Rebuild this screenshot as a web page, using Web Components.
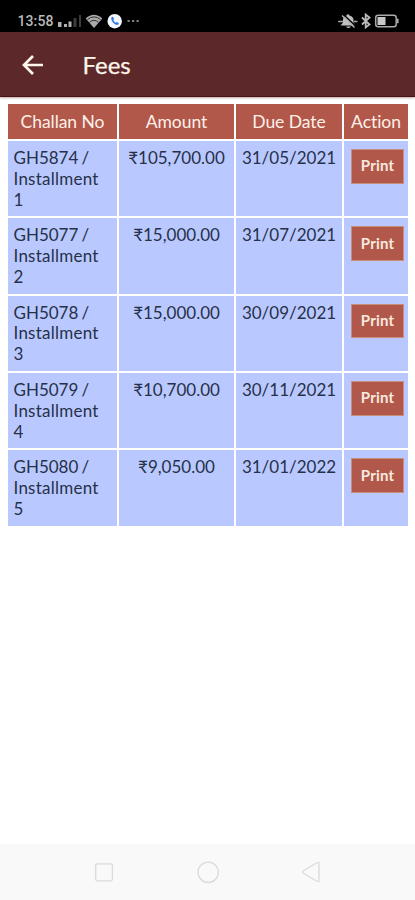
<!DOCTYPE html>
<html lang="en">
<head>
<meta charset="utf-8">
<meta name="viewport" content="width=device-width, initial-scale=1">
<title>Fees</title>
<style>
	body { margin: 0; background: #fff; font-family: Lato, "Noto Sans", sans-serif; font-variant-ligatures: none; }
</style>
</head>
<body>
<fees-screen></fees-screen>

<script>
// status-bar
class StatusBar extends HTMLElement {
	constructor() {
		super();
		this.attachShadow({ mode: "open" }).innerHTML = `
			<style>
				:host{display:flex; justify-content:space-between; box-sizing:border-box; height:32px; padding:10px 15px 0 17.500px; background:#000; color:#b9b9b9}
				.side{display:flex; align-items:center; height:22px}
				.time{font:500 14px/22px Roboto, sans-serif; width:36.500px; letter-spacing:.1px; white-space:nowrap}
				svg{display:block; flex:none}
			</style>
			<div class="side">
				<span class="time"><slot></slot></span>
				<svg width="86" height="22" viewBox="0 0 86 22">
					<g fill="#b0b0b0"><rect x="4" y="12" width="3.5" height="5"/><rect x="10" y="14" width="3" height="3"/><rect x="14.5" y="11.5" width="3" height="5.5"/></g>
					<g fill="#3c3c3c"><rect x="19.5" y="8" width="3" height="9"/><rect x="25" y="5" width="2" height="12"/></g>
					<path d="M31.700 8.500Q40 1 48.300 8.500L40 18Z" fill="#aaa"/>
					<g fill="none" stroke="#222" stroke-width=".9"><path d="M33.500 9.500Q40 4.300 46.500 9.500"/><path d="M35.500 12.300Q40 8.300 44.500 12.300"/></g>
					<circle cx="60.700" cy="11.200" r="7.200" fill="#f4f8ff"/>
					<path d="M57.400 7.300C56.400 10.600 60 14.800 63.700 15.100L65 13.400L62.900 11.900L61.700 12.700C60.500 12 59.700 11.100 59.300 10L60.100 9L59 6.700Z" fill="#3478df"/>
					<g fill="#808080"><rect x="73.500" y="10" width="2.200" height="2"/><rect x="78" y="10" width="2.200" height="2"/><rect x="82.500" y="10" width="2.200" height="2"/></g>
				</svg>
			</div>
			<div class="side">
				<svg width="63" height="22" viewBox="0 0 63 22">
					<path d="M3.500 15.500L6 12.500V10Q6 6.500 9.500 5.500Q11 3 12.500 5.500Q16.500 6.500 16.500 10V12.500L18.500 15.500ZM9 16.500H14Q11.500 19.500 9 16.500Z" fill="#c0c0c0"/>
					<path d="M6.500 4.500L18.500 16" stroke="#000" stroke-width="1.400"/>
					<path d="M5 5.500L17.500 17.500" stroke="#b5b5b5" stroke-width="1.500"/>
					<path d="M1.200 11.500H6M17 11.500H20.500" stroke="#aaa" stroke-width="1.700"/>
					<path d="M25 7.500L32.500 14.500L28.700 17.500V4.500L32.500 7.500L25 14.500" fill="none" stroke="#bbb" stroke-width="1.800"/>
					<rect x="38.700" y="5.200" width="20.500" height="11.600" rx="2.500" fill="none" stroke="#aaa" stroke-width="1.500"/>
					<rect x="40.500" y="7" width="8" height="8" fill="#c8c8c8"/>
					<rect x="60" y="8.700" width="1.600" height="4.500" fill="#aaa"/>
				</svg>
			</div>`;
	}
}
customElements.define("status-bar", StatusBar);

// app-bar
class AppBar extends HTMLElement {
	constructor() {
		super();
		this.attachShadow({ mode: "open" }).innerHTML = `
			<style>
				:host{display:flex; align-items:center; box-sizing:border-box; height:65px; padding:1px 0 0 22px; background:#5d2829; border-bottom:1px solid #4a1012; box-shadow:0 1px 2px rgba(93,40,41,.4); color:#fff6ed}
				svg{display:block; width:22px; margin-right:38.500px}
				h1{margin:0; font-size:24px; line-height:32px; font-weight:400; -webkit-text-stroke:.25px currentColor}
			</style>
			<svg height="22" viewBox="0 0 22 22"><path d="M21 11H2.500M11 2L2 11L11 20" fill="none" stroke="currentColor" stroke-width="2.700"/></svg>
			<h1><slot></slot></h1>`;
	}
}
customElements.define("app-bar", AppBar);

class PrintButton extends HTMLElement {
	constructor() {
		super();
		this.attachShadow({ mode: "open" }).innerHTML = `
			<style>
				:host{display:block}
				button{display:block; box-sizing:border-box; width:53px; height:34.500px; padding:0 0 1px; border:1px solid #c98e7b; background:#b1584b; color:#f8e9df; font:700 15px/20px Lato, sans-serif; letter-spacing:.15px}
				slot{display:block; margin-top:-1px}
			</style>
			<button><slot></slot></button>`;
	}
}
customElements.define("print-button", PrintButton);

// one line of the table, use the "head" attribute for the titles
class FeeRow extends HTMLElement {
	constructor() {
		super();
		this.attachShadow({ mode: "open" }).innerHTML = `
			<style>
				:host{display:grid; grid-template-columns:109px 115px 106px 64px; column-gap:2px; height:75.350px; color:#273048; font-size:17px; line-height:20.800px}
				:host([head]){height:35px; color:#fff0e7; font-size:17.500px; line-height:35px; letter-spacing:-.05px}
				.cell{box-sizing:border-box; padding-top:7px; background:#b9c9ff; text-align:center; white-space:nowrap}
				.challan{padding-left:5.500px; padding-right:14px; text-align:left; white-space:normal}
				.action{padding:8px 0 0 7px}
				:host([head]) .cell{padding:0; background:#b1584b; text-align:center; white-space:nowrap}
			</style>
			<div class="cell challan"><slot name="challan"></slot></div>
			<div class="cell"><slot name="amount"></slot></div>
			<div class="cell"><slot name="date"></slot></div>
			<div class="cell action"><slot name="action"></slot></div>`;
	}
}
customElements.define("fee-row", FeeRow);

class FeeTable extends HTMLElement {
	constructor() {
		super();
		this._shadow = this.attachShadow({ mode: "open" });
		this._rows = [];
	}
	connectedCallback() {
		this._render();
	}
	set rows(r) {
		this._rows = r;
		this._render();
	}
	_render() {
		this._shadow.innerHTML = `
			<style>
				:host{display:flex; flex-direction:column; gap:2px; padding:7px 7px 0 8px}
				.no{word-spacing:-1.200px}
				.part{letter-spacing:.250px}
			</style>
			<fee-row head>
				<span slot="challan">Challan No</span>
				<span slot="amount">Amount</span>
				<span slot="date">Due Date</span>
				<span slot="action">Action</span>
			</fee-row>
			${this._rows.map(([no, amount, date], i) => `
			<fee-row>
				<span slot="challan"><span class="no">${no} /</span> <span class="part">Installment ${i + 1}</span></span>
				<span slot="amount">₹${amount}</span>
				<span slot="date">${date}</span>
				<print-button slot="action">Print</print-button>
			</fee-row>`).join("")}`;
	}
}
customElements.define("fee-table", FeeTable);

class NavBar extends HTMLElement {
	constructor() {
		super();
		this.attachShadow({ mode: "open" }).innerHTML = `
			<style>
				:host{display:flex; align-items:center; justify-content:space-between; box-sizing:border-box; height:56px; padding:0 92px; background:#f9f9f9}
				svg{display:block; fill:none; stroke:#dadada; stroke-width:1.300}
			</style>
			<svg width="24" height="24"><rect x="3.700" y="3.800" width="16.700" height="17" rx="1.500"/></svg>
			<svg width="24" height="24"><circle cx="12.200" cy="12.300" r="10.200"/></svg>
			<svg width="24" height="24"><path d="M18.500 2.500Q20 2 20 3.500V20.500Q20 22 18.500 21.500L4 13Q3 12 4 11Z"/></svg>`;
	}
}
customElements.define("nav-bar", NavBar);

class FeesScreen extends HTMLElement {
	constructor() {
		super();
		this._shadow = this.attachShadow({ mode: "open" });
		this._shadow.innerHTML = `
			<style>
				:host{display:flex; flex-direction:column; height:900px; overflow:hidden}
				fee-table{flex:1}
			</style>
			<status-bar>13:58</status-bar>
			<app-bar>Fees</app-bar>
			<fee-table></fee-table>
			<nav-bar></nav-bar>`;
		this._shadow.querySelector("fee-table").rows = [
			["GH5874", "105,700.00", "31/05/2021"],
			["GH5077", "15,000.00", "31/07/2021"],
			["GH5078", "15,000.00", "30/09/2021"],
			["GH5079", "10,700.00", "30/11/2021"],
			["GH5080", "9,050.00", "31/01/2022"],
		];
	}
}
customElements.define("fees-screen", FeesScreen);
</script>
</body>
</html>
